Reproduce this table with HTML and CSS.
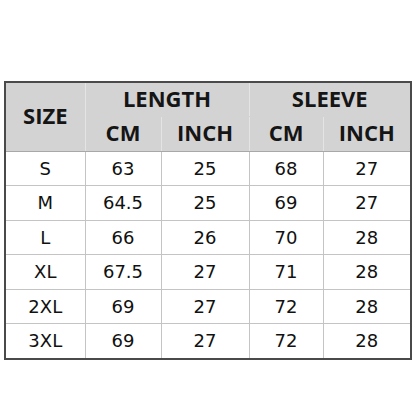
FILE: index.html
```html
<!DOCTYPE html>
<html>
<head>
<meta charset="utf-8">
<link rel="stylesheet" href="styles.css">
</head>
<body>
<div class="page">
<table class="size-table">
  <colgroup>
    <col class="c1"><col class="c2"><col class="c3"><col class="c4"><col class="c5">
  </colgroup>
  <thead>
    <tr class="h1">
      <th rowspan="2" class="size">SIZE</th>
      <th colspan="2">LENGTH</th>
      <th colspan="2" class="last">SLEEVE</th>
    </tr>
    <tr class="h2">
      <th>CM</th><th>INCH</th><th>CM</th><th class="last">INCH</th>
    </tr>
  </thead>
  <tbody>
    <tr class="r a"><td>S</td><td>63</td><td>25</td><td>68</td><td>27</td></tr>
    <tr class="r b"><td>M</td><td>64.5</td><td>25</td><td>69</td><td>27</td></tr>
    <tr class="r a"><td>L</td><td>66</td><td>26</td><td>70</td><td>28</td></tr>
    <tr class="r b"><td>XL</td><td>67.5</td><td>27</td><td>71</td><td>28</td></tr>
    <tr class="r a"><td>2XL</td><td>69</td><td>27</td><td>72</td><td>28</td></tr>
    <tr class="r b"><td>3XL</td><td>69</td><td>27</td><td>72</td><td>28</td></tr>
  </tbody>
</table>
</div>
</body>
</html>
```
FILE: styles.css
```css
html, body {
  margin: 0;
  padding: 0;
  background: #ffffff;
}
.page {
  padding: 81px 0 0 4px;
}
.size-table {
  border-collapse: collapse;
  table-layout: fixed;
  width: 408px;
  border: 2px solid #4a4a4a;
  color: #111;
}
.c1 { width: 80px; }
.c2 { width: 76px; }
.c3 { width: 88px; }
.c4 { width: 74px; }
.c5 { width: 88px; }
.size-table th {
  background: #d3d3d3;
  font-family: "Open Sans", sans-serif;
  font-weight: 700;
  font-size: 22px;
  color: #151515;
  border: 1px solid #e4e4e4;
  padding: 0 0 4px 0;
  text-align: center;
  line-height: 1;
}
.h1 th { height: 29px; border-top: 2px solid #4a4a4a; border-bottom-color: #d3d3d3; }
.h2 th { height: 30px; border-bottom: 1px solid #a8a8a8; }
.size-table th.size { border-left: 2px solid #4a4a4a; border-bottom: 1px solid #a8a8a8; }
.size-table th.last { border-right: 2px solid #4a4a4a; }
.size-table td {
  font-family: "DejaVu Sans", Verdana, sans-serif;
  font-size: 18px;
  color: #111;
  text-align: center;
  border: 1px solid #c4c4c4;
  padding: 0;
  line-height: 1;
  height: 33px;
}
.size-table tr.b td { height: 34px; }
.size-table td:first-child { border-left: 2px solid #4a4a4a; }
.size-table td:last-child { border-right: 2px solid #4a4a4a; }
.size-table tbody tr:last-child td { border-bottom: 2px solid #4a4a4a; }
```
